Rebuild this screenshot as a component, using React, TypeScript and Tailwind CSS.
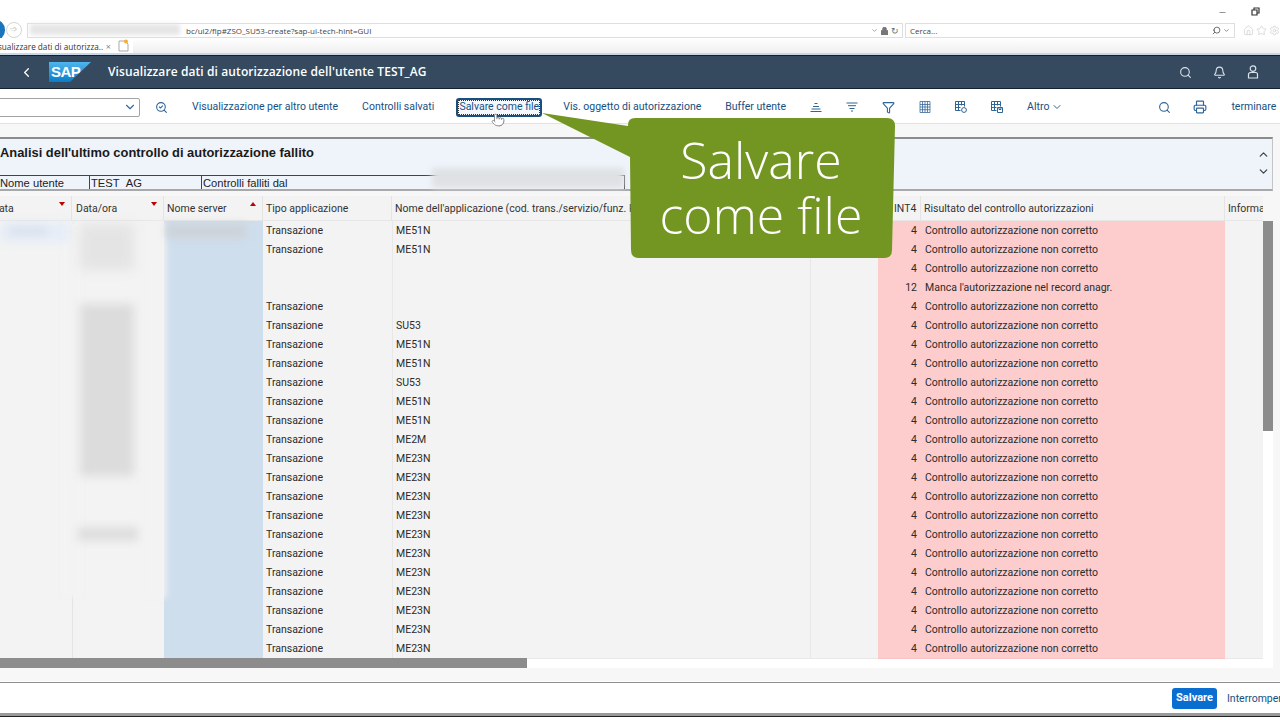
import { Bell, ChevronDown, ChevronLeft, ChevronUp, Filter, Minus, Pointer, Printer, Search, SearchCheck, Star, House, Settings } from "lucide-react";

const apps = ["ME51N", "ME51N", "", "", "", "SU53", "ME51N", "ME51N", "SU53", "ME51N", "ME51N", "ME2M", ...Array(11).fill("ME23N")];
const cols = "grid grid-cols-[72px_92px_99px_129px_418px_68px_43px_304px_38px]";

function SortMark({ up }: { up?: boolean }) {
  return (
    <svg width="6" height="4" viewBox="0 0 6 4" className="absolute right-[6px] top-[6px]">
      <path d={up ? "M0 4 L3 0 L6 4 Z" : "M0 0 L6 0 L3 4 Z"} fill="#bb0000" />
    </svg>
  );
}

function GridIcon({ variant }: { variant: "plain" | "gear" | "save" }) {
  return (
    <svg width="14" height="14" viewBox="0 0 14 14" fill="none" stroke="#2f6497" strokeWidth="1">
      {variant === "plain" ? (
        <path d="M2 1.5h10v11H2zM2 4.5h10M2 7h10M2 9.7h10M4.5 1.5v11M7 1.5v11M9.5 1.5v11" strokeOpacity="0.75" />
      ) : (
        <path d="M1.5 1.5h9v5M1.5 1.5v9h5M1.5 4.5h9M1.5 7.5h5M4.5 1.5v9M7.5 1.5v4" />
      )}
      {variant === "gear" && <circle cx="10" cy="10" r="2.4" />}
      {variant === "save" && <path d="M7.5 7.5h5v5h-5zM9 7.5v2h2v-2" />}
    </svg>
  );
}

function ToolText({ children, className }: { children: string; className?: string }) {
  return <span className={`shrink-0 whitespace-nowrap text-[#17507f] ${className}`}>{children}</span>;
}

export default function App() {
  return (
    <div className="relative h-[720px] w-[1280px] overflow-hidden bg-white font-['Roboto',sans-serif] text-[10.5px] text-[#2b2b2b]">
      {/* browser chrome */}
      <div className="flex h-[23px] items-center justify-end bg-white pr-[20px] text-[#444]">
        <Minus size={9} className="mr-[24px] mt-[2px]" strokeWidth={1.5} />
        <svg width="9" height="9" viewBox="0 0 9 9" fill="none" stroke="#333" strokeWidth="1.2">
          <path d="M1 3h5v5H1zM3 3V1h5v5H6" />
        </svg>
      </div>
      <div className="flex h-[15px] items-stretch">
        <div className="relative w-[27px] shrink-0">
          <div className="absolute left-[-14px] top-[-3px] h-[20px] w-[19px] rounded-full bg-[#1b75bb]" />
          <div className="absolute left-[6px] top-[-1px] flex h-[16px] w-[16px] items-center justify-center rounded-full border border-[#d5d5d5] text-[9px] text-[#c8c8c8]">➩</div>
        </div>
        <div className="flex w-[878px] items-center justify-between border border-[#dedede] pl-[158px] pr-[3px] font-['Open_Sans',sans-serif] text-[8px] text-[#444]">
          <span>bc/ui2/flp#ZSO_SU53-create?sap-ui-tech-hint=GUI</span>
          <span className="flex items-center gap-[3px] text-[#666]">
            <ChevronDown size={7} />
            <svg width="7" height="8" viewBox="0 0 7 8"><path d="M0 3.5h7V8H0zM1.5 3.5V2a2 2 0 0 1 4 0v1.5" fill="#777" stroke="#777" strokeWidth="0.6" /></svg>
            <span className="text-[9px] leading-none">↻</span>
          </span>
        </div>
        <div className="ml-[2px] flex w-[331px] items-center justify-between border border-[#dedede] pl-[4px] pr-[4px] font-['Open_Sans',sans-serif] text-[8px] text-[#444]">
          <span>Cerca...</span>
          <span className="flex items-center gap-[2px]">
            <Search size={9} className="-scale-x-100" />
            <ChevronDown size={7} />
          </span>
        </div>
        <div className="ml-[8px] flex items-center gap-[2px] text-[#d8d8d8]">
          <House size={11} />
          <Star size={11} />
          <Settings size={11} />
        </div>
      </div>
      <div className="flex h-[17px] items-stretch border-b-2 border-[#c8d6e8] bg-gradient-to-b from-white to-[#efefef]">
        <div className="relative w-[113px] overflow-hidden whitespace-nowrap bg-white font-['Open_Sans',sans-serif] text-[8.2px] leading-[18px] text-[#333]">
          <span className="absolute left-[-9px] w-[112px] overflow-hidden">Visualizzare dati di autorizza...</span>
          <span className="absolute right-[2px] text-[9px] text-[#888]">×</span>
        </div>
        <div className="flex w-[20px] items-center justify-center bg-white">
          <svg width="11" height="13" viewBox="0 0 11 13">
            <path d="M1 2h6l3 3v7H1z" fill="#fff" stroke="#aaa" />
            <circle cx="8" cy="2.5" r="2" fill="#f0b030" />
          </svg>
        </div>
      </div>

      {/* shell bar */}
      <header className="flex h-[34px] items-center border-y border-[#14202e] bg-[#354a5f] text-white">
        <ChevronLeft size={15} className="ml-[19px]" strokeWidth={2} />
        <div className="relative ml-[15px] h-[20px] w-[42px]">
          <svg width="42" height="20" viewBox="0 0 42 20" className="absolute inset-0">
            <defs>
              <linearGradient id="sapBlue" x1="0" y1="0" x2="0" y2="1">
                <stop offset="0" stopColor="#4fb5ee" />
                <stop offset="1" stopColor="#0a7cc9" />
              </linearGradient>
            </defs>
            <path d="M0 0H42L21 20H0Z" fill="url(#sapBlue)" />
          </svg>
          <span className="absolute left-[2px] top-[1px] font-['Liberation_Sans',sans-serif] text-[15px] font-bold leading-[18px] tracking-[-0.5px] text-white">SAP</span>
        </div>
        <h1 className="ml-[17px] font-['Open_Sans',sans-serif] text-[12px] font-semibold tracking-[0.1px]">Visualizzare dati di autorizzazione dell'utente TEST_AG</h1>
        <div className="ml-auto flex items-center gap-[21px] pr-[21px] text-[#dbe3ea]">
          <Search size={13} />
          <Bell size={13} />
          <svg width="12" height="14" viewBox="0 0 12 14" fill="none" stroke="currentColor" strokeWidth="1.2">
            <circle cx="6" cy="3.6" r="2.8" />
            <path d="M1.5 13V9.5a2 2 0 0 1 2-2h5a2 2 0 0 1 2 2V13z" />
          </svg>
        </div>
      </header>

      {/* toolbar */}
      <div className="flex h-[35px] items-center border-b border-[#e2e2e2] bg-white pt-[2px]">
        <div className="ml-[-6px] flex h-[19px] w-[146px] shrink-0 items-center justify-end rounded-[2px] border border-[#a3a3a3] pr-[2px] text-[#3a6a99]">
          <ChevronDown size={14} />
        </div>
        <SearchCheck size={13} className="ml-[15px] shrink-0 text-[#2f6497]" />
        <ToolText className="ml-[24px]">Visualizzazione per altro utente</ToolText>
        <ToolText className="ml-[24px]">Controlli salvati</ToolText>
        <div className="ml-[22px] flex h-[19px] w-[86px] shrink-0 items-center justify-center rounded-[3px] border-2 border-[#17507f] bg-[#f4f8fc] outline-dotted outline-1 -outline-offset-3 outline-[#333]">
          <ToolText>Salvare come file</ToolText>
        </div>
        <ToolText className="ml-[21px]">Vis. oggetto di autorizzazione</ToolText>
        <ToolText className="ml-[24px]">Buffer utente</ToolText>
        <svg width="12" height="10" viewBox="0 0 12 10" fill="none" stroke="#2f6497" className="ml-[24px] shrink-0">
          <path d="M4.5 1.5h3M3 4.5h6M1.5 7h9M0.5 9.5h11" />
        </svg>
        <svg width="12" height="10" viewBox="0 0 12 10" fill="none" stroke="#2f6497" className="ml-[24px] shrink-0">
          <path d="M0.5 1h11M2 3.7h8M3.5 6.5h5M5 9h2" />
        </svg>
        <Filter size={13} className="ml-[24px] shrink-0 text-[#2f6497]" />
        <div className="ml-[23px] shrink-0"><GridIcon variant="plain" /></div>
        <div className="ml-[22px] shrink-0"><GridIcon variant="gear" /></div>
        <div className="ml-[22px] shrink-0"><GridIcon variant="save" /></div>
        <ToolText className="ml-[23px]">Altro</ToolText>
        <ChevronDown size={12} className="ml-[2px] shrink-0 text-[#2f6497]" />
        <Search size={13} className="ml-[95px] shrink-0 text-[#2f6497]" />
        <Printer size={14} className="ml-[22px] shrink-0 text-[#2f6497]" />
        <ToolText className="ml-[24px]">terminare</ToolText>
      </div>

      {/* page */}
      <div className="h-[557px] bg-[#f7f7f7] pt-[13px]">
        <section className="w-[1273px] border-y-2 border-r border-[#8c8c8c] border-r-[#c4c4c4] border-b-[#a8a8a8] bg-[#eff4fb]">
          <div className="flex h-[36px] items-start justify-between">
            <h2 className="pt-[4px] font-['Liberation_Sans',sans-serif] text-[12.9px] font-bold text-[#1a1a1a]">Analisi dell'ultimo controllo di autorizzazione fallito</h2>
            <div className="flex flex-col pr-[2px] pt-[9px] text-[#444]">
              <ChevronUp size={13} strokeWidth={2.4} />
              <ChevronDown size={13} strokeWidth={2.4} className="mt-[4px]" />
            </div>
          </div>
          <div className="flex h-[14px] font-['Liberation_Sans',sans-serif] text-[11.2px] leading-[15px] text-[#222]">
            <div className="w-[90px] border-r border-t border-[#444]">Nome utente</div>
            <div className="w-[112px] border-r border-t border-[#444] pl-[1px]">TEST&nbsp;&nbsp;AG</div>
            <div className="w-[423px] border-r border-t border-[#444] pl-[1px]">Controlli falliti dal</div>
          </div>
        </section>

        <div className="relative mt-[5px] w-[1280px] overflow-hidden">
          <div className={`${cols} h-[25px] w-[1263px] items-center border-b border-[#e6e6e6] bg-[#f3f3f3] text-[#333]`}>
            <div className="relative h-full border-r border-[#e4e4e4] leading-[25px]">
              <span className="absolute left-[-8px]">Data</span>
              <SortMark />
            </div>
            <div className="relative h-full border-r border-[#e4e4e4] pl-[4px] leading-[25px]">Data/ora<SortMark /></div>
            <div className="relative h-full border-r border-[#e4e4e4] pl-[3px] leading-[25px]">Nome server<SortMark up /></div>
            <div className="h-full border-r border-[#e4e4e4] pl-[3px] leading-[25px]">Tipo applicazione</div>
            <div className="h-full overflow-hidden whitespace-nowrap border-r border-[#e4e4e4] pl-[3px] leading-[25px]">Nome dell'applicazione (cod. trans./servizio/funz. RFC)</div>
            <div className="h-full border-r border-[#e4e4e4]" />
            <div className="h-full border-r border-[#e4e4e4] pl-[16px] leading-[25px]">INT4</div>
            <div className="h-full border-r border-[#e4e4e4] pl-[3px] leading-[25px]">Risultato del controllo autorizzazioni</div>
            <div className="h-full overflow-hidden whitespace-nowrap pl-[3px] leading-[25px]">Informa</div>
          </div>

          <div className="flex">
            <div className="w-[1263px]">
              {apps.map((app, i) => {
                const blank = i === 2 || i === 3;
                return (
                  <div key={i} className={`${cols} h-[19px] leading-[19px]`}>
                    <div className="bg-[#f3f3f3]" />
                    <div className="border-l border-[#e4e4e4] bg-[#f3f3f3]" />
                    <div className="bg-[#cfdeed]" />
                    <div className="border-b border-[#e8e8e8] bg-[#f3f3f3] pl-[3px]">{blank ? "" : "Transazione"}</div>
                    <div className="border-b border-l border-[#e8e8e8] bg-[#f3f3f3] pl-[3px]">{app}</div>
                    <div className="border-b border-l border-[#e8e8e8] bg-[#f3f3f3]" />
                    <div className="border-b border-[#f7c4c4] bg-[#fdcdcd] pr-[4px] text-right">{i === 3 ? 12 : 4}</div>
                    <div className="border-b border-[#f7c4c4] bg-[#fdcdcd] pl-[4px]">{i === 3 ? "Manca l'autorizzazione nel record anagr." : "Controllo autorizzazione non corretto"}</div>
                    <div className="border-b border-[#e8e8e8] bg-[#f3f3f3]" />
                  </div>
                );
              })}
            </div>
            <div className="w-[10px] bg-white">
              <div className="h-[210px] bg-[#8c8c8c]" />
            </div>
            <div className="w-[7px] bg-[#f7f7f7]" />
          </div>
          <div className="flex h-[10px] w-[1273px] bg-white">
            <div className="h-full w-[527px] bg-[#8c8c8c]" />
          </div>
        </div>
      </div>

      {/* footer */}
      <footer className="absolute inset-x-0 top-[682px] flex h-[32px] items-center justify-end border-t border-[#8f8f8f] bg-white">
        <button className="h-[21px] w-[45px] rounded-[3px] bg-[#0a6ed1] text-[11px] font-bold text-white">Salvare</button>
        <span className="ml-[10px] w-[53px] overflow-hidden whitespace-nowrap text-[#17507f]">Interrompere</span>
      </footer>
      <div className="absolute inset-x-0 top-[713px] h-[3px] bg-[#9a9a9a]" />
      <div className="absolute inset-x-0 top-[716px] h-px bg-[#222]" />

      {/* blurred-out values */}
      <div className="absolute left-[30px] top-[24px] h-[11px] w-[150px] bg-[#e6e6e6] blur-[2px]" />
      <div className="absolute left-[432px] top-[168px] h-[20px] w-[192px] bg-[#dfe1e4] blur-[3px]" />
      <div className="absolute left-[62px] top-[222px] h-[375px] w-[20px] bg-[#f3f3f3] blur-[2px]" />
      <div className="absolute left-[0px] top-[222px] h-[20px] w-[70px] bg-[#e6edf7] blur-[5px]" />
      <div className="absolute left-[10px] top-[228px] h-[6px] w-[36px] bg-[#d5dde8] blur-[4px]" />
      <div className="absolute left-[80px] top-[224px] h-[46px] w-[54px] bg-[#e4e4e4] blur-[6px]" />
      <div className="absolute left-[80px] top-[304px] h-[172px] w-[54px] bg-[#dcdcdc] blur-[5px]" />
      <div className="absolute left-[78px] top-[527px] h-[14px] w-[60px] bg-[#dedede] blur-[4px]" />
      <div className="absolute left-[148px] top-[222px] h-[376px] w-[18px] bg-[#f3f3f3] blur-[3px]" />
      <div className="absolute left-[166px] top-[224px] h-[14px] w-[80px] bg-[#cdd2d8] blur-[4px]" />

      {/* callout */}
      <svg width="356" height="150" viewBox="0 0 356 150" className="absolute left-[540px] top-[112px]">
        <path d="M2 1 L88 14 L88 13 Q88 6 95 6 L347 6 Q355 6 355 14 L352 138 Q352 146 344 146 L99 146 Q91 146 91 138 L90 45 Z" fill="#739622" />
      </svg>
      <div className="absolute left-[631px] top-[133px] w-[260px] text-center font-['Open_Sans',sans-serif] text-[50px] font-light leading-[55px] text-white">
        Salvare<br />come file
      </div>
      <Pointer size={14} className="absolute left-[491px] top-[113px] fill-white text-[#666]" strokeWidth={1.2} />
    </div>
  );
}
